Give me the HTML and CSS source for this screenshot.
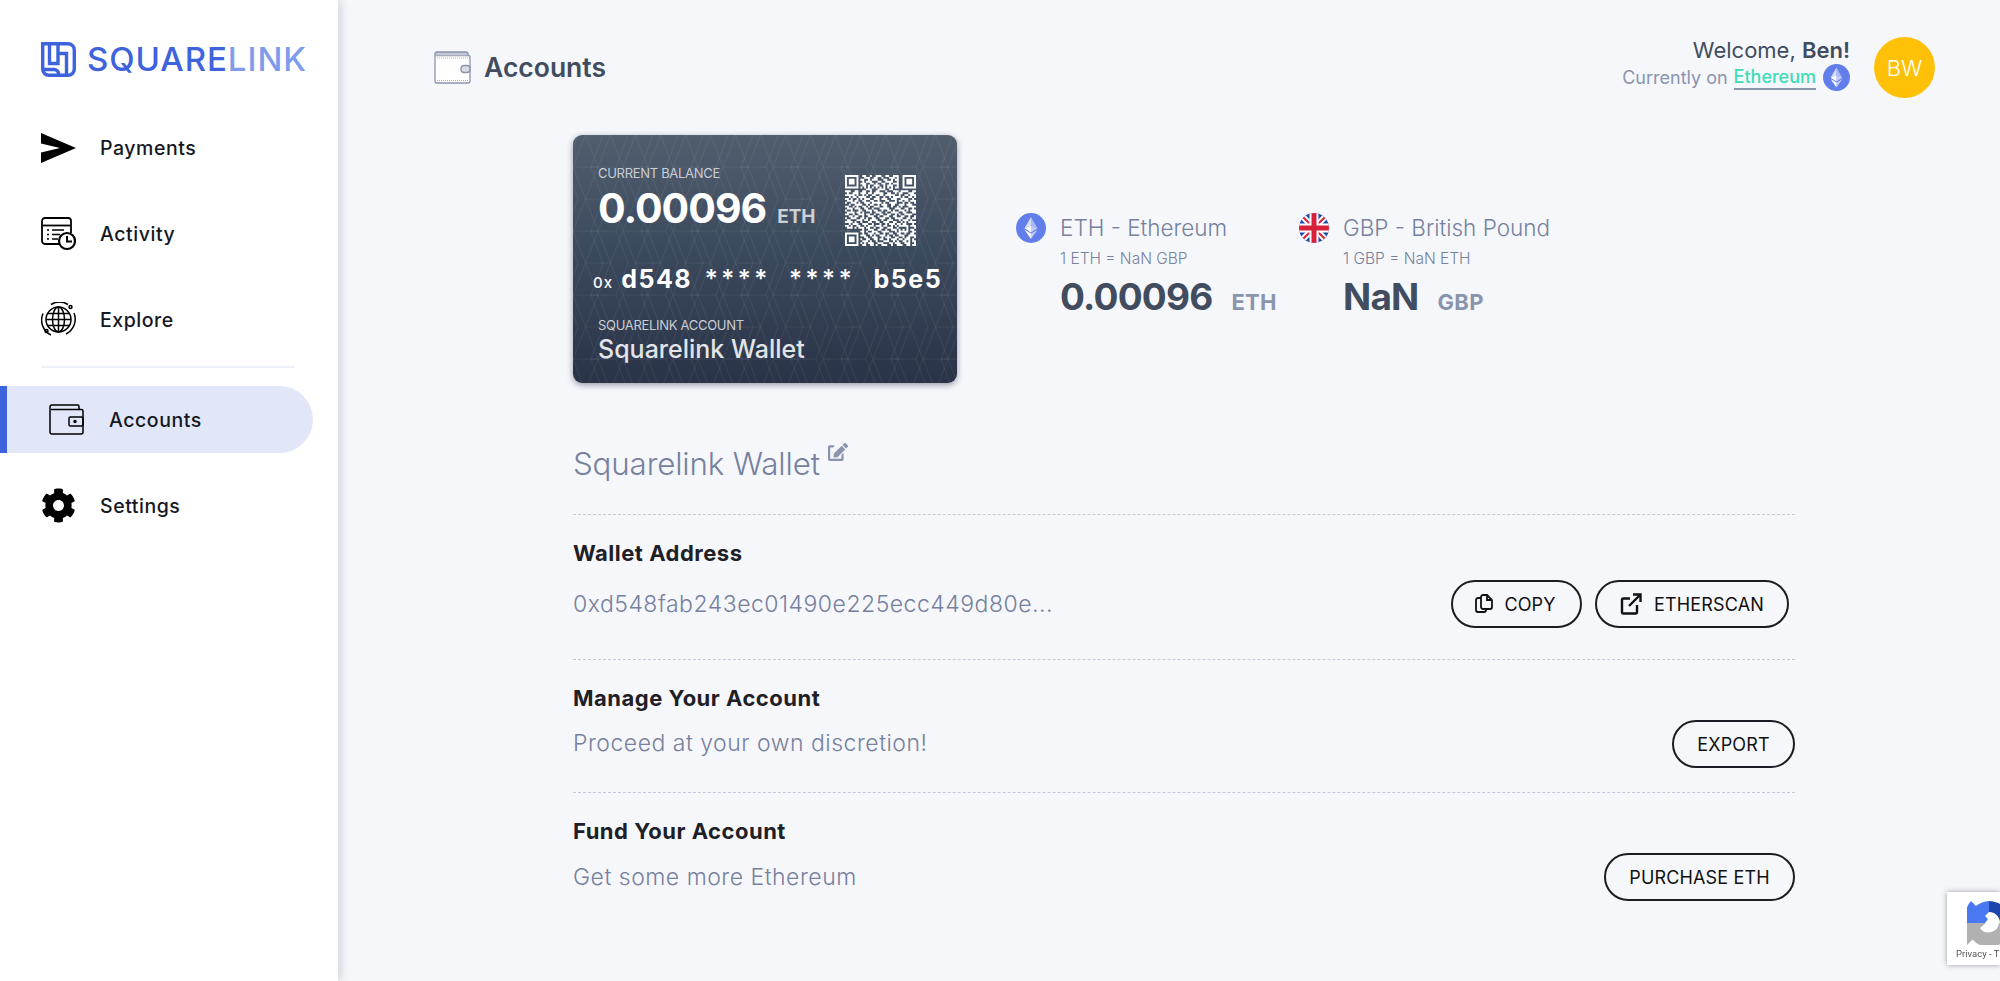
FILE: index.html
```html
<!DOCTYPE html>
<html lang="en">
<head>
<meta charset="utf-8">
<title>Squarelink - Accounts</title>
<link rel="stylesheet" href="styles.css">
</head>
<body>
<aside class="sidebar">
  <div class="logo">
    <svg class="logo-mark" viewBox="0 0 35 35" fill="none" stroke="#3d63dd" stroke-width="3.400">
      <path d="M1.700 1.700H27a6.300 6.300 0 0 1 6.300 6.300v19a6.300 6.300 0 0 1-6.300 6.300H8a6.300 6.300 0 0 1-6.300-6.300Z"/>
      <path d="M8.500 2V21.500H17V2"/>
      <path d="M17 11.500H25.500V33"/>
      <path d="M2 27.500H13a4.500 4.500 0 0 1 4.500 4.500v1"/>
    </svg>
    <span class="logo-text">SQUARE<span class="logo-light">LINK</span></span>
  </div>
  <nav class="nav">
    <a class="nav-item">
      <svg class="nav-icon" viewBox="0 0 35 35"><path d="M0 3L35 18 0 33V22.500L19 18 0 13.500Z" fill="#000"/></svg>
      <span>Payments</span>
    </a>
    <a class="nav-item">
      <svg class="nav-icon" viewBox="0 0 35 35" fill="none" stroke="#000" stroke-width="1.800">
        <path d="M21 28H4a3 3 0 0 1-3-3V5a3 3 0 0 1 3-3h23a3 3 0 0 1 3 3v12"/>
        <path d="M1 9.500h29"/>
        <path d="M6 14h2M11 14h12M6 18.500h2M11 18.500h8M6 23h2M11 23h6" stroke-width="1.500"/>
        <circle cx="26" cy="25" r="8" fill="#fff" stroke-width="2.200"/>
        <path d="M26 20v5.500h5" stroke-width="2"/>
      </svg>
      <span>Activity</span>
    </a>
    <a class="nav-item">
      <svg class="nav-icon" viewBox="0 0 35 35" fill="none" stroke="#000" stroke-width="1.500">
        <circle cx="17.500" cy="17.500" r="12.500"/>
        <ellipse cx="17.500" cy="17.500" rx="6" ry="12.500"/>
        <path d="M17.500 5v25M5 17.500h25M6.500 11.500h22M6.500 23.500h22"/>
        <path d="M10 2.500A16.500 16.500 0 0 1 27 2.500M33 11A16.500 16.500 0 0 1 25 32M10 33A16.500 16.500 0 0 1 2 11.500"/>
        <circle cx="29.500" cy="5" r="1.500"/>
        <circle cx="5.500" cy="29" r="1.500"/>
      </svg>
      <span>Explore</span>
    </a>
    <hr class="nav-divider">
    <a class="nav-item nav-item-active">
      <svg class="nav-icon" viewBox="0 0 35 35" fill="none" stroke="#000" stroke-width="1.500">
        <path d="M30 7.500V4.500a1.500 1.500 0 0 0-1.500-1.500H3a2 2 0 0 0-2 2v25a2 2 0 0 0 2 2h29a2 2 0 0 0 2-2V9a1.500 1.500 0 0 0-1.500-1.500H2"/>
        <rect x="20" y="15" width="14" height="9" rx="1.500"/>
        <circle cx="26" cy="19.500" r="1" fill="#000"/>
      </svg>
      <span>Accounts</span>
    </a>
    <a class="nav-item">
      <svg class="nav-icon" viewBox="0 0 512 512"><path fill="#000" d="M487.400 315.700l-42.600-24.600c4.300-23.200 4.300-47 0-70.200l42.600-24.600c4.900-2.800 7.100-8.600 5.500-14-11.100-35.600-30-67.800-54.700-94.600-3.800-4.100-10-5.100-14.800-2.300L380.800 110c-17.900-15.400-38.500-27.300-60.800-35.100V25.800c0-5.600-3.900-10.500-9.400-11.700-36.700-8.200-74.300-7.800-109.200 0-5.500 1.200-9.400 6.100-9.400 11.700V75c-22.200 7.900-42.800 19.800-60.800 35.100L88.700 85.500c-4.900-2.800-11-1.900-14.800 2.300-24.700 26.700-43.600 58.900-54.700 94.600-1.700 5.400.6 11.200 5.500 14L67.300 221c-4.300 23.200-4.300 47 0 70.200l-42.600 24.600c-4.900 2.800-7.100 8.600-5.500 14 11.100 35.600 30 67.800 54.700 94.600 3.800 4.100 10 5.100 14.800 2.300l42.600-24.600c17.900 15.400 38.500 27.300 60.800 35.100v49.200c0 5.600 3.900 10.500 9.400 11.700 36.700 8.200 74.300 7.800 109.200 0 5.500-1.200 9.400-6.100 9.400-11.700v-49.200c22.200-7.900 42.800-19.800 60.800-35.100l42.600 24.600c4.900 2.800 11 1.900 14.800-2.300 24.700-26.700 43.600-58.900 54.700-94.600 1.500-5.500-.7-11.300-5.600-14.100zM256 336c-44.100 0-80-35.900-80-80s35.900-80 80-80 80 35.900 80 80-35.900 80-80 80z"/></svg>
      <span>Settings</span>
    </a>
  </nav>
</aside>

<main class="main">
  <header class="topbar">
    <div class="page-title">
      <svg class="page-icon" viewBox="0 0 37 33">
        <path d="M1 4.500V30a2 2 0 0 0 2 2h31a2 2 0 0 0 2-2V6a1.500 1.500 0 0 0-1.500-1.500H1Z" fill="#fff" stroke="#8a94ad" stroke-width="1.300"/>
        <path d="M1 4.500V3a2 2 0 0 1 2-2h29a2 2 0 0 1 2 2v1.500" fill="#c3c8d6" stroke="#8a94ad" stroke-width="1.300"/>
        <path d="M3 7h31M3 29.500h31" fill="none" stroke="#a9b0c3" stroke-width="1" stroke-dasharray="1 1"/>
        <rect x="27" y="14.500" width="9" height="7" rx="3" fill="#d8dbe5" stroke="#8a94ad" stroke-width="1.300"/>
      </svg>
      <h1>Accounts</h1>
    </div>
    <div class="user">
      <div class="user-text">
        <div class="welcome">Welcome, <b>Ben!</b></div>
        <div class="network">Currently on <span class="network-name">Ethereum</span>
          <svg class="network-icon" viewBox="0 0 30 30"><circle cx="15" cy="15" r="15" fill="#627eea"/><path d="M15 4v8.500L8.500 15.300Z" fill="#fff" fill-opacity=".75"/><path d="M15 4l6.500 11.300L15 12.500Z" fill="#fff" fill-opacity=".45"/><path d="M8.500 15.300L15 12.500v7Z" fill="#fff"/><path d="M21.500 15.300L15 12.500v7Z" fill="#fff" fill-opacity=".6"/><path d="M8.500 16.800L15 20.500V26Z" fill="#fff"/><path d="M21.500 16.800L15 20.500V26Z" fill="#fff" fill-opacity=".6"/></svg>
        </div>
      </div>
      <div class="avatar">BW</div>
    </div>
  </header>

  <div class="content">
    <section class="summary">
      <div class="card">
        <svg class="card-pattern" width="100%" height="100%">
          <defs>
            <pattern id="hex" width="50" height="64" patternUnits="userSpaceOnUse">
              <path d="M12.500 0L0 32 12.500 64M12.500 0L25 32 12.500 64M37.500 0L25 32 37.500 64M37.500 0L50 32 37.500 64M0 32H25M12.500 0H37.500M12.500 64H37.500M5 0L-7 32 5 64M30 0L18 32 30 64M55 0L43 32 55 64M18 32H43" fill="none" stroke="#fff" stroke-opacity=".06" stroke-width="1"/>
            </pattern>
          </defs>
          <rect width="100%" height="100%" fill="url(#hex)"/>
        </svg>
        <div class="card-top">
          <div>
            <div class="card-label">CURRENT BALANCE</div>
            <div class="card-balance">0.00096<span class="card-unit">ETH</span></div>
          </div>
          <svg class="qr" viewBox="0 0 37 37">
            <path fill="none" stroke="#fff" d="M0 .5h7M0 1.500h1M6 1.500h1M0 2.500h1M2 2.500h3M6 2.500h1M0 3.500h1M2 3.500h3M6 3.500h1M0 4.500h1M2 4.500h3M6 4.500h1M0 5.500h1M6 5.500h1M0 6.500h7M30 .5h7M30 1.500h1M36 1.500h1M30 2.500h1M32 2.500h3M36 2.500h1M30 3.500h1M32 3.500h3M36 3.500h1M30 4.500h1M32 4.500h3M36 4.500h1M30 5.500h1M36 5.500h1M30 6.500h7M0 30.500h7M0 31.500h1M6 31.500h1M0 32.500h1M2 32.500h3M6 32.500h1M0 33.500h1M2 33.500h3M6 33.500h1M0 34.500h1M2 34.500h3M6 34.500h1M0 35.500h1M6 35.500h1M0 36.500h7
            M9 .5h2M13 .5h1M16 .5h3M21 .5h2M25 .5h3M10 1.500h3M15 1.500h2M19 1.500h1M23 1.500h3M27 1.500h1M8 2.500h2M12 2.500h1M14 2.500h3M20 2.500h2M24 2.500h1M26 2.500h2M9 3.500h1M11 3.500h3M17 3.500h2M21 3.500h4M27 3.500h1M8 4.500h3M13 4.500h2M16 4.500h1M19 4.500h2M23 4.500h1M25 4.500h3M9 5.500h2M12 5.500h1M15 5.500h3M20 5.500h1M22 5.500h3M27 5.500h1M8 6.500h1M10 6.500h1M12 6.500h1M14 6.500h1M16 6.500h1M18 6.500h1M20 6.500h1M22 6.500h1M24 6.500h1M26 6.500h2M11 7.500h3M17 7.500h4M23 7.500h2M9 8.500h2M13 8.500h1M16 8.500h2M21 8.500h1M25 8.500h3
            M0 8.500h3M5 8.500h2M29 8.500h4M35 8.500h2M1 9.500h1M4 9.500h3M8 9.500h3M12 9.500h2M15 9.500h5M22 9.500h2M26 9.500h1M28 9.500h2M33 9.500h3M0 10.500h5M6 10.500h1M9 10.500h1M11 10.500h1M14 10.500h2M18 10.500h2M21 10.500h5M28 10.500h1M31 10.500h2M34 10.500h3M2 11.500h1M4 11.500h2M7 11.500h4M13 11.500h1M16 11.500h2M20 11.500h1M23 11.500h1M25 11.500h4M30 11.500h1M33 11.500h2M36 11.500h1M0 12.500h2M3 12.500h1M6 12.500h1M8 12.500h1M10 12.500h3M15 12.500h3M19 12.500h3M24 12.500h3M29 12.500h4M35 12.500h1M1 13.500h3M5 13.500h2M9 13.500h2M13 13.500h2M17 13.500h1M21 13.500h2M26 13.500h1M28 13.500h2M31 13.500h2M34 13.500h3M0 14.500h1M3 14.500h3M7 14.500h1M10 14.500h3M14 14.500h5M20 14.500h1M23 14.500h4M30 14.500h1M33 14.500h1M36 14.500h1M2 15.500h1M5 15.500h4M11 15.500h1M13 15.500h2M17 15.500h1M19 15.500h3M24 15.500h2M28 15.500h3M32 15.500h3M0 16.500h2M4 16.500h1M6 16.500h1M9 16.500h2M12 16.500h1M15 16.500h3M20 16.500h2M24 16.500h1M27 16.500h1M29 16.500h1M33 16.500h4M1 17.500h3M5 17.500h3M10 17.500h2M14 17.500h1M18 17.500h5M26 17.500h3M31 17.500h2M35 17.500h1M0 18.500h1M3 18.500h1M7 18.500h2M11 18.500h3M15 18.500h2M19 18.500h1M22 18.500h2M25 18.500h1M28 18.500h3M32 18.500h1M34 18.500h3M1 19.500h4M6 19.500h2M9 19.500h1M13 19.500h1M16 19.500h3M21 19.500h1M24 19.500h4M30 19.500h2M35 19.500h2M0 20.500h2M4 20.500h1M7 20.500h3M11 20.500h2M15 20.500h1M18 20.500h2M22 20.500h2M26 20.500h1M28 20.500h1M31 20.500h4M2 21.500h2M5 21.500h2M9 21.500h1M12 21.500h3M17 21.500h1M20 21.500h3M25 21.500h2M29 21.500h2M33 21.500h1M36 21.500h1M0 22.500h1M3 22.500h3M8 22.500h2M11 22.500h1M14 22.500h2M18 22.500h3M23 22.500h1M26 22.500h4M32 22.500h2M35 22.500h2M1 23.500h2M6 23.500h3M10 23.500h2M13 23.500h4M19 23.500h1M22 23.500h3M28 23.500h1M30 23.500h3M34 23.500h1M0 24.500h4M5 24.500h1M8 24.500h1M12 24.500h2M16 24.500h2M20 24.500h3M25 24.500h2M29 24.500h1M31 24.500h1M33 24.500h4M2 25.500h1M4 25.500h3M9 25.500h3M14 25.500h1M18 25.500h1M21 25.500h1M23 25.500h3M27 25.500h2M30 25.500h2M35 25.500h1M0 26.500h2M3 26.500h1M6 26.500h2M10 26.500h1M12 26.500h3M16 26.500h3M20 26.500h2M24 26.500h1M26 26.500h1M28 26.500h5M34 26.500h3M1 27.500h3M5 27.500h1M7 27.500h3M11 27.500h2M15 27.500h1M18 27.500h2M22 27.500h3M27 27.500h1M32 27.500h1M36 27.500h1M9 28.500h1M12 28.500h3M17 28.500h2M21 28.500h1M24 28.500h3M28 28.500h1M30 28.500h1M32 28.500h1M34 28.500h2M8 29.500h2M11 29.500h1M14 29.500h3M19 29.500h4M26 29.500h1M28 29.500h5M35 29.500h2
            M9 30.500h1M12 30.500h3M16 30.500h2M20 30.500h1M23 30.500h2M27 30.500h2M31 30.500h1M34 30.500h2M8 31.500h3M13 31.500h1M15 31.500h1M18 31.500h3M22 31.500h1M25 31.500h1M28 31.500h3M33 31.500h4M10 32.500h2M14 32.500h3M19 32.500h1M21 32.500h3M26 32.500h2M30 32.500h1M32 32.500h2M36 32.500h1M8 33.500h1M11 33.500h2M15 33.500h2M18 33.500h2M22 33.500h1M24 33.500h3M28 33.500h2M31 33.500h3M35 33.500h1M9 34.500h3M13 34.500h1M16 34.500h1M20 34.500h3M25 34.500h1M27 34.500h1M30 34.500h2M33 34.500h1M35 34.500h2M8 35.500h1M10 35.500h1M12 35.500h3M17 35.500h3M23 35.500h2M26 35.500h3M31 35.500h3M36 35.500h1M9 36.500h2M13 36.500h2M16 36.500h1M19 36.500h3M24 36.500h1M27 36.500h3M32 36.500h2M35 36.500h2"/>
          </svg>
        </div>
        <div class="card-number">
          <span class="card-prefix">0x</span><span class="card-chunk">d548</span><span class="card-stars">****</span><span class="card-stars">****</span><span class="card-chunk">b5e5</span>
        </div>
        <div class="card-label card-label-account">SQUARELINK ACCOUNT</div>
        <div class="card-name">Squarelink Wallet</div>
      </div>

      <div class="currency currency-eth">
        <div class="currency-head">
          <svg class="currency-icon" viewBox="0 0 30 30"><circle cx="15" cy="15" r="15" fill="#627eea"/><path d="M15 4v8.500L8.500 15.300Z" fill="#fff" fill-opacity=".75"/><path d="M15 4l6.500 11.300L15 12.500Z" fill="#fff" fill-opacity=".45"/><path d="M8.500 15.300L15 12.500v7Z" fill="#fff"/><path d="M21.500 15.300L15 12.500v7Z" fill="#fff" fill-opacity=".6"/><path d="M8.500 16.800L15 20.500V26Z" fill="#fff"/><path d="M21.500 16.800L15 20.500V26Z" fill="#fff" fill-opacity=".6"/></svg>
          <span>ETH - Ethereum</span>
        </div>
        <div class="currency-rate">1 ETH = NaN GBP</div>
        <div class="currency-value">0.00096<span class="currency-unit">ETH</span></div>
      </div>

      <div class="currency">
        <div class="currency-head">
          <svg class="currency-icon" viewBox="0 0 30 30">
            <defs><clipPath id="flag"><circle cx="15" cy="15" r="15"/></clipPath></defs>
            <g clip-path="url(#flag)">
              <rect width="30" height="30" fill="#1f4aa8"/>
              <path d="M0 0L30 30M30 0L0 30" stroke="#fff" stroke-width="6"/>
              <path d="M0 0L30 30M30 0L0 30" stroke="#d8203a" stroke-width="2"/>
              <path d="M15 0V30M0 15H30" stroke="#fff" stroke-width="9"/>
              <path d="M15 0V30M0 15H30" stroke="#d8203a" stroke-width="5"/>
            </g>
          </svg>
          <span>GBP - British Pound</span>
        </div>
        <div class="currency-rate">1 GBP = NaN ETH</div>
        <div class="currency-value">NaN<span class="currency-unit">GBP</span></div>
      </div>
    </section>

    <h2 class="wallet-title">Squarelink Wallet
      <svg class="edit-icon" viewBox="0 0 576 512"><path fill="#8a94ad" d="M402.600 83.200l90.200 90.200c3.800 3.800 3.800 10 0 13.800L274.400 405.600l-92.800 10.300c-12.400 1.400-22.900-9.100-21.500-21.500l10.300-92.800L388.800 83.200c3.800-3.800 10-3.800 13.800 0zm162-22.900l-48.800-48.800c-15.200-15.200-39.900-15.200-55.200 0l-35.400 35.400c-3.800 3.800-3.800 10 0 13.800l90.200 90.200c3.800 3.800 10 3.800 13.800 0l35.400-35.400c15.200-15.300 15.200-40 0-55.200zM384 346.200V448H64V128h73.200c3.200 0 6.200-1.300 8.500-3.500l40-40c7.600-7.600 2.200-20.500-8.500-20.500H48C21.500 64 0 85.500 0 112v352c0 26.500 21.500 48 48 48h352c26.500 0 48-21.500 48-48V306.200c0-10.700-12.900-16-20.500-8.500l-40 40c-2.200 2.300-3.500 5.300-3.500 8.500z"/></svg>
    </h2>

    <section class="row row-address">
      <h3>Wallet Address</h3>
      <div class="row-body">
        <p>0xd548fab243ec01490e225ecc449d80e...</p>
        <div class="actions">
          <button class="btn btn-copy" type="button">
            <svg class="btn-icon" viewBox="0 0 18 20" fill="none" stroke="#111" stroke-width="1.800"><path d="M6 4H3a2 2 0 0 0-2 2v10a2 2 0 0 0 2 2h6a2 2 0 0 0 2-2v-1"/><path d="M6 3a2 2 0 0 1 2-2h4l5 5v7a2 2 0 0 1-2 2H8a2 2 0 0 1-2-2Z"/><path d="M12 1v5h5"/></svg>
            COPY
          </button>
          <button class="btn btn-scan" type="button">
            <svg class="btn-icon btn-icon-ext" viewBox="0 0 22 22" fill="none" stroke="#111" stroke-width="2.400"><path d="M17 12v7a1.500 1.500 0 0 1-1.500 1.500h-12A1.500 1.500 0 0 1 2 19V7a1.500 1.500 0 0 1 1.500-1.500H10"/><path d="M9 13L20 2"/><path d="M13 1.500h7.500V9"/></svg>
            ETHERSCAN
          </button>
        </div>
      </div>
    </section>

    <section class="row row-manage">
      <h3>Manage Your Account</h3>
      <div class="row-body">
        <p>Proceed at your own discretion!</p>
        <div class="actions"><button class="btn btn-export" type="button">EXPORT</button></div>
      </div>
    </section>

    <section class="row row-fund">
      <h3>Fund Your Account</h3>
      <div class="row-body">
        <p>Get some more Ethereum</p>
        <div class="actions"><button class="btn btn-purchase" type="button">PURCHASE ETH</button></div>
      </div>
    </section>
  </div>
</main>

<aside class="recaptcha">
  <svg class="recaptcha-logo" viewBox="0 0 44 44">
    <path d="M0 22V44l5.500-5.500A22 22 0 0 0 44 22H32a10.500 10.500 0 0 1-19 5l6-5Z" fill="#b1b1b1"/>
    <path d="M22 0A22 22 0 0 1 44 22H33a11 11 0 0 0-11-11Z" fill="#1c46ab"/>
    <path d="M4 0L9 5A22 22 0 0 1 22 0V11l-4 4 3 3-3 4H0A22 22 0 0 1 4 0Z" fill="#4a78f0"/>
  </svg>
  <div class="recaptcha-text">Privacy - T</div>
</aside>
</body>
</html>
```

FILE: styles.css
```css
* { box-sizing: border-box; }

html, body { height: 100%; }

body {
  margin: 0;
  display: flex;
  height: 981px;
  overflow: hidden;
  background: #f6f7fb;
  font-family: Inter, "Liberation Sans", sans-serif;
  color: #111;
}

.sidebar {
  width: 338px;
  flex: none;
  background: #fff;
  padding-top: 42px;
  box-shadow: 2px 0 10px rgba(60, 70, 100, .22);
  position: relative;
}

.logo {
  display: flex;
  align-items: center;
  gap: 11px;
  padding-left: 41px;
  height: 35px;
}

.logo-mark { width: 35px; height: 35px; flex: none; }

.logo-text {
  font-size: 33px;
  font-weight: 500;
  line-height: 35px;
  color: #3d63dd;
  letter-spacing: .95px;
}

.logo-light { color: #7f9cec; }

.nav { margin-top: 37px; display: flex; flex-direction: column; }

.nav-item {
  display: flex;
  align-items: center;
  gap: 25px;
  height: 67px;
  margin-bottom: 19px;
  padding-left: 41px;
  font-size: 19.500px;
  font-weight: 500;
  letter-spacing: .55px;
  color: #15181f;
}

.nav-item span { margin: 1px 0 0 -1px; }

.nav-item-active span { margin: 0; }

.nav-icon { width: 35px; height: 35px; flex: none; }

.nav-divider {
  width: 254px;
  height: 2px;
  margin: -6px 0 18px 41px;
  border: 0;
  background: #eef0f7;
}

.nav-item-active {
  width: 313px;
  padding-left: 42px;
  background: #e1e7f9;
  border-left: 7px solid #3d63dd;
  border-radius: 0 34px 34px 0;
}

.main { flex: 1; min-width: 0; }

.topbar {
  display: flex;
  justify-content: space-between;
  align-items: center;
  height: 61px;
  margin-top: 37px;
  padding: 0 65px 0 96px;
}

.page-title { display: flex; align-items: center; gap: 13px; margin-top: -1px; }

.page-icon { width: 37px; height: 33px; }

.page-title h1 {
  margin: 0;
  font-size: 26.500px;
  font-weight: 600;
  letter-spacing: 0;
  color: #414d5f;
}

.user { display: flex; align-items: center; gap: 24px; }

.user-text { text-align: right; padding-bottom: 8px; }

.welcome { font-size: 22px; line-height: 28px; color: #414d5f; font-weight: 400; letter-spacing: 0; }

.welcome b { font-weight: 600; }

.network {
  display: flex;
  align-items: center;
  justify-content: flex-end;
  gap: 7px;
  font-size: 18px;
  line-height: 23px;
  color: #8a94ad;
  font-weight: 400;
  letter-spacing: 0;
}

.network-name {
  color: #3fdcb5;
  font-weight: 500;
  border-bottom: 2px solid #8a94ad;
  margin-left: -1px;
}

.network-icon { width: 27px; height: 27px; }

.avatar {
  width: 61px;
  height: 61px;
  border-radius: 50%;
  background: #ffc107;
  color: #fff;
  font-size: 22px;
  font-weight: 300;
  display: flex;
  align-items: center;
  justify-content: center;
}

.content { margin: 37px 0 0 235px; width: 1222px; }

.summary { display: flex; height: 248px; }

.card {
  position: relative;
  width: 384px;
  height: 248px;
  flex: none;
  border-radius: 9px;
  padding: 29px 0 0 25px;
  background: linear-gradient(180deg, #515e6e 0%, #3c4a5e 45%, #2a3347 100%);
  box-shadow: 0 2px 6px rgba(30, 40, 60, .45);
  color: #fff;
  overflow: hidden;
}

.card-pattern { position: absolute; inset: 0; }

.card-top { position: relative; display: flex; justify-content: space-between; padding-right: 41px; }

.card-label { font-size: 13px; line-height: 18px; color: #c9cdd5; letter-spacing: -.3px; }

.card-balance { font-size: 41px; font-weight: 700; line-height: 48px; letter-spacing: -1px; margin-top: 2px; }

.card-unit { font-size: 19px; font-weight: 700; color: #ccd0d7; margin-left: 11px; letter-spacing: 0; }

.qr { width: 71px; height: 71px; margin-top: 11px; }

.card-number {
  position: relative;
  display: flex;
  align-items: baseline;
  margin: 16px 0 0 -5px;
  white-space: nowrap;
  font-weight: 700;
  font-size: 25px;
  line-height: 34px;
}

.card-prefix { font-size: 15px; font-weight: 500; width: 29px; letter-spacing: 1px; }

.card-chunk { letter-spacing: 1.500px; width: 86px; }

.card-stars { letter-spacing: 3.500px; width: 87px; font-weight: 500; }

.card-label-account { position: relative; margin-top: 16px; }

.card-name {
  position: relative;
  font-size: 25px;
  font-weight: 500;
  line-height: 30px;
  color: #e2e4e8;
  letter-spacing: 0;
}

.currency { margin: 78px 0 0 0; }

.currency-eth { margin-left: 59px; width: 283px; flex: none; }

.currency-head {
  display: flex;
  align-items: center;
  gap: 14px;
  font-size: 22.500px;
  line-height: 30px;
  font-weight: 300;
  color: #76819e;
  letter-spacing: 0;
  white-space: nowrap;
}

.currency-icon { width: 30px; height: 30px; flex: none; }

.currency-rate {
  margin: 6px 0 0 44px;
  font-size: 15.500px;
  line-height: 20px;
  font-weight: 300;
  color: #76819e;
  letter-spacing: 0;
}

.currency-value {
  margin: 5px 0 0 44px;
  font-size: 37px;
  font-weight: 700;
  line-height: 46px;
  color: #414d5f;
  letter-spacing: -.8px;
  white-space: nowrap;
}

.currency-unit { font-size: 22px; font-weight: 700; color: #8a94ad; margin-left: 19px; letter-spacing: .3px; }

.wallet-title {
  margin: 60px 0 0 0;
  height: 72px;
  font-size: 31.300px;
  font-weight: 300;
  line-height: 40px;
  color: #76819e;
  letter-spacing: -.15px;
  border-bottom: 1px dashed #c5c9da;
}

.edit-icon { width: 20px; height: 18px; vertical-align: 14px; margin-left: -1px; }

.row { padding-top: 24px; border-bottom: 1px dashed #c5c9da; }

.row h3 {
  margin: 0;
  font-size: 22px;
  font-weight: 700;
  line-height: 28px;
  color: #1e2026;
  letter-spacing: .5px;
}

.row-body { display: flex; justify-content: space-between; align-items: center; }

.row p {
  margin: 0;
  font-size: 23px;
  font-weight: 300;
  color: #76819e;
  letter-spacing: .5px;
}

.row-address { height: 145px; }
.row-address .row-body { margin-top: 13px; }
.row-address .actions { margin-right: 6px; }

.row-manage { height: 133px; }
.row-manage .row-body { margin-top: 8px; }
.row-manage p { margin-top: -3px; }

.row-fund { border-bottom: 0; }
.row-fund .row-body { margin-top: 8px; }
.row-fund p { margin-top: -1px; }

.actions { display: flex; gap: 13px; }

.btn {
  display: flex;
  align-items: center;
  justify-content: center;
  gap: 9px;
  height: 48px;
  border: 2px solid #1a1d24;
  border-radius: 24px;
  background: transparent;
  font-family: inherit;
  font-size: 18px;
  font-weight: 400;
  color: #111;
  letter-spacing: .15px;
  padding: 0;
}

.btn-copy { width: 131px; gap: 11px; padding-right: 2px; }
.btn-scan { width: 194px; gap: 12px; }
.btn-export { width: 123px; }
.btn-purchase { width: 191px; }

.btn-icon { width: 18px; height: 20px; }
.btn-icon-ext { width: 22px; height: 22px; }

.recaptcha {
  position: fixed;
  right: 0;
  top: 892px;
  width: 53px;
  height: 73px;
  background: #fff;
  box-shadow: 0 0 5px rgba(80, 80, 80, .55);
  padding: 9px 0 0 20px;
  overflow: hidden;
}

.recaptcha-logo { display: block; width: 44px; height: 44px; }

.recaptcha-text { margin: 3px 0 0 -11px; font-family: Roboto, sans-serif; font-size: 9.500px; color: #555; white-space: nowrap; }
```
